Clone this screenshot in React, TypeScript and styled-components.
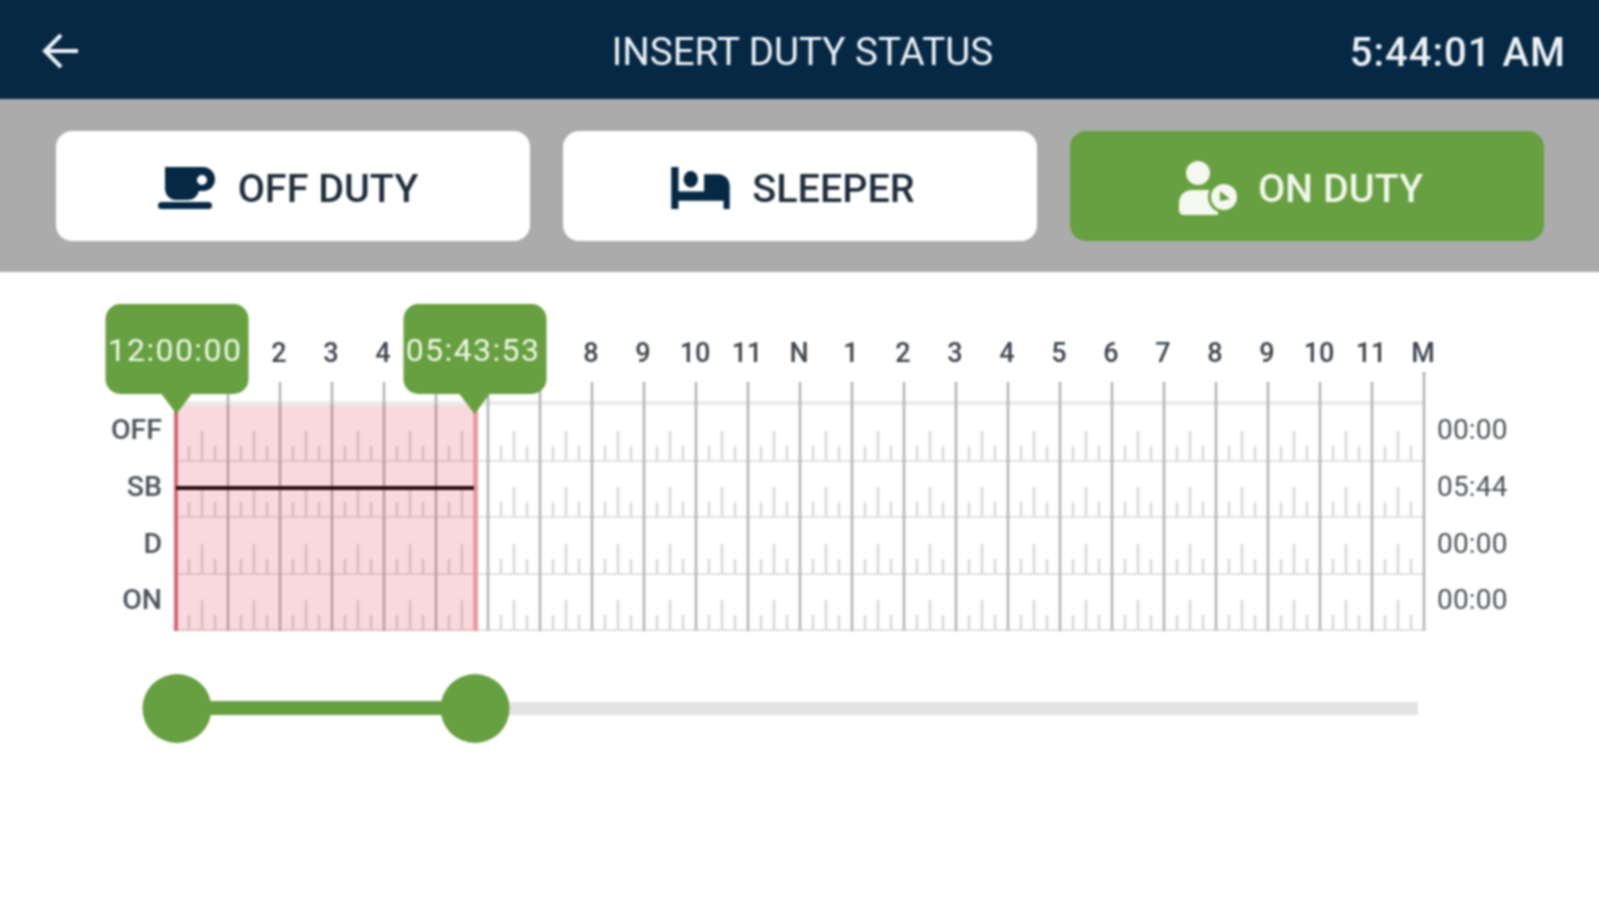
import styled, { createGlobalStyle } from "styled-components";

const GREEN = "#67a040";
const NAVY = "#052845";
const HOUR_WIDTH = 52;
const GRAPH_LEFT = 176;
const SECONDS_PER_DAY = 86400;
// the page is soft-focus; it bleeds past the window so the blur has no pale rim
const BLEED = 10;

const HOURS = [
  "", "", "2", "3", "4", "", "", "", "8", "9", "10", "11", "N",
  "1", "2", "3", "4", "5", "6", "7", "8", "9", "10", "11", "M",
];

const STATUS_ROWS = [
  { label: "OFF", total: "00:00" },
  { label: "SB", total: "05:44" },
  { label: "D", total: "00:00" },
  { label: "ON", total: "00:00" },
];

const RANGE_START = 0;
const RANGE_END = 5 * 3600 + 43 * 60 + 53;

const toPixels = (seconds: number) =>
  (seconds / SECONDS_PER_DAY) * HOUR_WIDTH * 24;

const GlobalStyle = createGlobalStyle`
  html, body {
    margin: 0;
    padding: 0;
    background: #fff;
  }
  body {
    font-family: Roboto, "Liberation Sans", sans-serif;
    overflow: hidden;
  }
`;

const Frame = styled.div`
  width: 1599px;
  height: 900px;
  overflow: hidden;
`;

const Page = styled.div`
  width: 1599px;
  height: 900px;
  margin: -${BLEED}px;
  padding: ${BLEED}px;
  background: #fff;
  filter: blur(0.9px);
`;

const Header = styled.header`
  height: 99px;
  margin: -${BLEED}px -${BLEED}px 0;
  background: ${NAVY};
  color: #eef2f5;
  display: grid;
  grid-template-columns: 1fr auto 1fr;
  align-items: center;
  padding: ${BLEED}px ${33 + BLEED}px 0 ${41 + BLEED}px;
`;

const BackButton = styled.button`
  background: none;
  border: 0;
  padding: 0;
  margin-top: 2px;
  color: inherit;
  display: flex;
  justify-self: start;
`;

const Title = styled.h1`
  margin: 3px 2px 0 0;
  font-size: 38.6px;
  font-weight: 400;
  white-space: nowrap;
`;

const Clock = styled.div`
  justify-self: end;
  margin-top: 5px;
  font-size: 40px;
  font-weight: 500;
  letter-spacing: 1px;
  white-space: nowrap;
`;

const StatusBar = styled.nav`
  height: 173px;
  box-sizing: border-box;
  margin: 0 -${BLEED}px;
  background: #ababab;
  display: grid;
  grid-template-columns: repeat(3, 474px);
  column-gap: 33px;
  padding: 32px 0 0 ${56 + BLEED}px;
`;

const StatusButton = styled.button<{ $active?: boolean; $nudge?: number }>`
  height: 110px;
  border: 0;
  border-radius: 16px;
  background: ${(p) => (p.$active ? GREEN : "#fff")};
  color: ${(p) => (p.$active ? "#f1f6ec" : "#1d2d3b")};
  font-family: inherit;
  font-size: 39.5px;
  font-weight: 500;
  display: flex;
  align-items: center;
  justify-content: center;
  gap: 22px;
  padding: 4px ${(p) => p.$nudge ?? 10}px 0 0;
  white-space: nowrap;

  svg {
    color: ${(p) => (p.$active ? "#f4f8f0" : NAVY)};
    flex: none;
  }
`;

const ChartSection = styled.section`
  position: relative;
  padding-top: 66px;
`;

const HourRow = styled.div`
  display: grid;
  grid-template-columns: repeat(25, ${HOUR_WIDTH}px);
  height: 34px;
  margin-left: ${GRAPH_LEFT - HOUR_WIDTH / 2 - 1}px;
`;

const HourLabel = styled.span`
  text-align: center;
  font-size: 27px;
  font-weight: 500;
  line-height: 30px;
  color: #3a4550;
`;

const GraphRow = styled.div`
  display: flex;
  align-items: flex-start;
`;

const RowLabels = styled.div`
  width: 162px;
  padding: 30px 0 0;
  margin-right: 10px;
`;

const RowLabel = styled.div`
  height: 56.8px;
  line-height: 56.8px;
  text-align: right;
  font-size: 28.5px;
  font-weight: 500;
  color: #4b535b;
`;

const Totals = styled.div`
  margin-left: 9px;
  padding-top: 30px;
`;

const Total = styled.div`
  height: 56.8px;
  line-height: 56.8px;
  font-size: 28px;
  letter-spacing: 0.2px;
  color: #4d5358;
`;

const Bubble = styled.div`
  position: absolute;
  top: 32px;
  width: 143px;
  height: 90px;
  box-sizing: border-box;
  padding: 2px 4px 0 0;
  border-radius: 15px;
  background: ${GREEN};
  color: #f0f6ea;
  font-size: 32px;
  letter-spacing: 1.4px;
  white-space: nowrap;
  display: flex;
  align-items: center;
  justify-content: center;
  transform: translateX(-70.5px);

  &::after {
    content: "";
    position: absolute;
    top: 90px;
    left: 55.5px;
    border-left: 15px solid transparent;
    border-right: 15px solid transparent;
    border-top: 20px solid ${GREEN};
  }
`;

const Slider = styled.div`
  position: relative;
  height: 13px;
  width: 1241px;
  margin: 70px 0 0 ${GRAPH_LEFT + 1}px;
  background: #e3e3e3;
`;

const SliderFill = styled.div`
  position: absolute;
  top: -1px;
  height: 14px;
  background: ${GREEN};
`;

const SliderThumb = styled.div`
  position: absolute;
  top: -28px;
  width: 69px;
  height: 69px;
  border-radius: 50%;
  background: ${GREEN};
  transform: translateX(-34.5px);
`;

const BackIcon = () => (
  <svg width="38" height="38" viewBox="0 0 38 38" fill="none" stroke="currentColor" strokeWidth="4">
    <path d="M37 19H4" />
    <path d="M20 3 4 19l16 16" />
  </svg>
);

const CupIcon = () => (
  <svg width="58" height="43" viewBox="0 0 58 43" fill="currentColor">
    <path
      fillRule="evenodd"
      d="M7 0H45C52 0 57 6 57 12C57 19 52 24 45 24H41C39 30 35 33 30 33H18C11 33 7 27 7 21ZM44 8A5 5 0 1 0 44 18A5 5 0 1 0 44 8Z"
    />
    <rect x="0" y="35" width="54" height="7" rx="3.5" />
  </svg>
);

const BedIcon = () => (
  <svg width="59" height="42" viewBox="0 0 57 41" fill="currentColor">
    <path d="M0 0h7v24h25V7h14c6 0 11 5 11 11v23h-6v-8H7v8H0Z" />
    <ellipse cx="19" cy="12" rx="7" ry="8" />
  </svg>
);

const UserClockIcon = () => (
  <svg width="61" height="55" viewBox="0 0 61 55" fill="currentColor" style={{ marginRight: -2 }}>
    <circle cx="21" cy="12" r="12" />
    <path d="M2 49V42C2 34 8 29 15 29H30C37 29 41 34 41 41V54H7C4 54 2 52 2 49Z" />
    <circle cx="47" cy="36" r="14.5" stroke={GREEN} strokeWidth="3" />
    <path d="M43 30L53 38L43 40Z" fill={GREEN} />
  </svg>
);

const LogGraph = () => {
  const rowLines = [461, 517, 574, 630].map((y) => y - 372);
  const hours = Array.from({ length: 25 }, (_, i) => 4 + i * HOUR_WIDTH);
  const end = 4 + toPixels(RANGE_END);
  return (
    <svg width="1256" height="260" viewBox="0 0 1256 260" style={{ display: "block", flex: "none" }}>
      <rect x="4" y="29" width="1248" height="4" fill="#ececec" />
      {rowLines.map((base) => (
        <g key={base}>
          <line x1="4" x2="1252" y1={base} y2={base} stroke="#d9d9d9" strokeWidth="1.5" />
          {hours.slice(0, 24).map((x) => (
            <g key={x} stroke="#d8d8d8" strokeWidth="2.5">
              <line x1={x + 13} x2={x + 13} y1={base} y2={base - 15} />
              <line x1={x + 26} x2={x + 26} y1={base} y2={base - 30} />
              <line x1={x + 39} x2={x + 39} y1={base} y2={base - 15} />
            </g>
          ))}
        </g>
      ))}
      {hours.map((x, i) => (
        <line
          key={x}
          x1={x}
          x2={x}
          y1={i === 24 ? 0 : 10}
          y2={259}
          stroke="#b2b2b2"
          strokeWidth="2.5"
        />
      ))}
      <rect x="4" y="33" width={end - 4} height="226" fill="#dc323c" fillOpacity="0.18" />
      <rect x="2" y="33" width="4" height="226" fill="#d9626c" />
      <rect x={end - 1} y="33" width="5" height="226" fill="#ee9aa1" />
      <rect x="4" y="114" width={end - 4} height="4" fill="#2a0b12" />
    </svg>
  );
};

export default function App() {
  return (
    <Frame>
      <GlobalStyle />
      <Page>
        <Header>
          <BackButton aria-label="Back">
            <BackIcon />
          </BackButton>
          <Title>INSERT DUTY STATUS</Title>
          <Clock>5:44:01 AM</Clock>
        </Header>

        <StatusBar>
          <StatusButton>
            <CupIcon />
            OFF DUTY
          </StatusButton>
          <StatusButton $nudge={14}>
            <BedIcon />
            SLEEPER
          </StatusButton>
          <StatusButton $active $nudge={14}>
            <UserClockIcon />
            ON DUTY
          </StatusButton>
        </StatusBar>

        <ChartSection>
          <HourRow>
            {HOURS.map((hour, i) => (
              <HourLabel key={i}>{hour}</HourLabel>
            ))}
          </HourRow>

          <GraphRow>
            <RowLabels>
              {STATUS_ROWS.map((row) => (
                <RowLabel key={row.label}>{row.label}</RowLabel>
              ))}
            </RowLabels>
            <LogGraph />
            <Totals>
              {STATUS_ROWS.map((row) => (
                <Total key={row.label}>{row.total}</Total>
              ))}
            </Totals>
          </GraphRow>

          <Bubble style={{ left: GRAPH_LEFT + toPixels(RANGE_START) }}>12:00:00</Bubble>
          <Bubble style={{ left: GRAPH_LEFT + toPixels(RANGE_END) }}>05:43:53</Bubble>

          <Slider>
            <SliderFill style={{ left: toPixels(RANGE_START), width: toPixels(RANGE_END) }} />
            <SliderThumb style={{ left: toPixels(RANGE_START) }} />
            <SliderThumb style={{ left: toPixels(RANGE_END) }} />
          </Slider>
        </ChartSection>
      </Page>
    </Frame>
  );
}
